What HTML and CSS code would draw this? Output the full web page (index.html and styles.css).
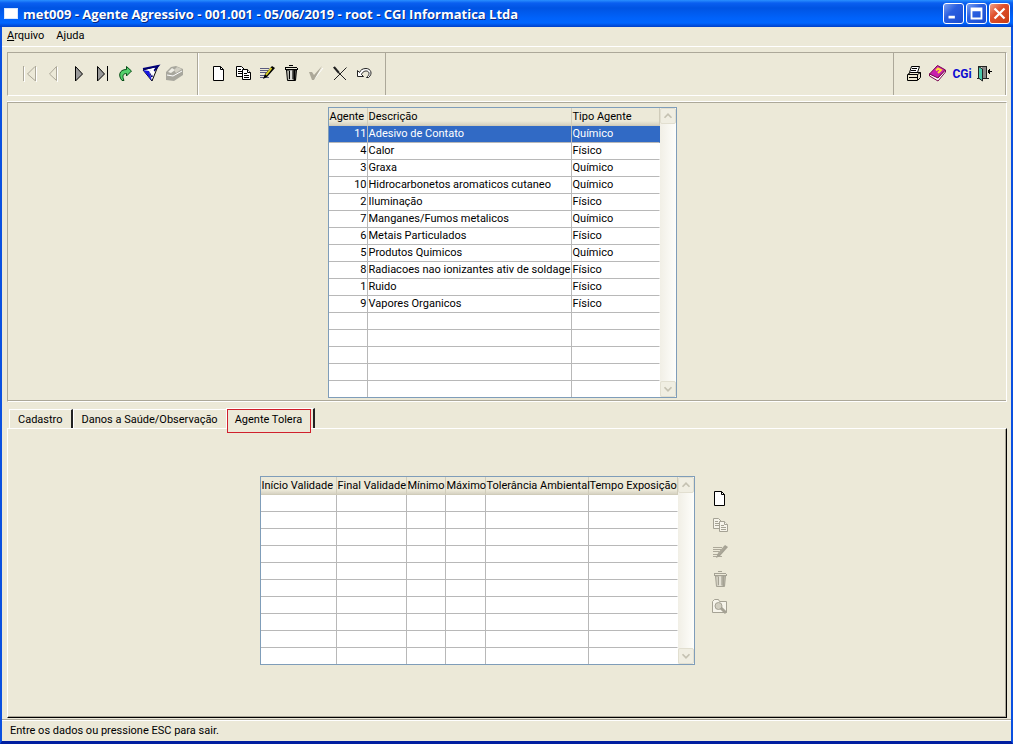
FILE: index.html
```html
<!DOCTYPE html>
<html lang="pt-BR">
<head>
<meta charset="utf-8">
<title>met009 - Agente Agressivo</title>
<link rel="stylesheet" href="styles.css">
</head>
<body>
<svg class="sprite" aria-hidden="true">
  <symbol id="i-new" viewBox="0 0 24 24"><path d="M7.500 4.500H14.500L17.500 7.500V18.500H7.500Z" fill="var(--paper)" stroke="currentColor"/><path d="M14.500 4.500V7.500H17.500" fill="none" stroke="currentColor"/></symbol>
  <symbol id="i-copy" viewBox="0 0 24 24"><g fill="var(--paper)" stroke="currentColor"><path d="M6.500 4.500H11.500L14.500 7.500V14.500H6.500Z"/><path d="M8 7.500H11M8 9.500H12M8 11.500H12"/><path d="M12.500 7.500H17.500L20.500 10.500V17.500H12.500Z"/><path d="M17.500 7.500V10.500H20.500M14 11.500H17M14 13.500H19M14 15.500H19"/></g></symbol>
  <symbol id="i-edit" viewBox="0 0 24 24"><path d="M6 6.500H15M6 8.500H14M6 10.500H12M6 13.500H11M6 15.500H15" stroke="var(--line)"/><path d="M18 4L21 6L13 15L9 17L11 12Z" fill="currentColor"/><path d="M17.500 6L12 13" stroke="var(--pencil)" stroke-width="2"/></symbol>
  <symbol id="i-trash" viewBox="0 0 24 24"><path d="M7 5.500H19M11 3.500H15M19.500 6V8M7.500 6V8M8 7.500H19" stroke="currentColor"/><path d="M8.500 8L9.500 18.500H17.500L18.500 8Z" fill="var(--can)" stroke="currentColor"/><path d="M11.500 9V17M15 9V17" stroke="currentColor"/><path d="M13 8V18" stroke="var(--paper)"/><path d="M16.500 8V18" stroke="currentColor" stroke-width="2"/></symbol>
  <symbol id="i-find" viewBox="0 0 24 24"><path d="M5.500 17.500V6.500L7.500 4.500H11.500L12.500 6.500H19.500V17.500Z" fill="var(--paper)" stroke="currentColor"/><circle cx="11.500" cy="11" r="3.500" fill="var(--can)" stroke="currentColor"/><path d="M14 13L19 18" stroke="currentColor" stroke-width="3"/></symbol>
</svg>
<div class="window">
  <header class="titlebar">
    <span class="app-icon"></span>
    <h1 class="title">met009 - Agente Agressivo - 001.001 - 05/06/2019 - root - CGI Informatica Ltda</h1>
    <div class="controls">
      <button class="control" aria-label="Minimizar"><svg viewBox="0 0 21 21"><path d="M5 13H12V16H5Z" fill="#fff"/></svg></button>
      <button class="control" aria-label="Maximizar"><svg viewBox="0 0 21 21"><path d="M4 4H17V17H4ZM6 8V15H15V8Z" fill="#fff" fill-rule="evenodd"/></svg></button>
      <button class="control close" aria-label="Fechar"><svg viewBox="0 0 21 21"><path d="M5 5L16 16M16 5L5 16" stroke="#fff" stroke-width="2.500"/></svg></button>
    </div>
  </header>
  <nav class="menu">
    <button class="menu-item"><u>A</u>rquivo</button>
    <button class="menu-item">A<u>j</u>uda</button>
  </nav>
  <div class="toolbar">
    <div class="tools">
      <button class="tool" aria-label="Primeiro" disabled><svg viewBox="0 0 24 24"><path d="M6.500 5V20M18.500 5V20" stroke="#fff"/><path d="M5.500 4V19M17.500 4V19M17 4.500L9.500 12L17 18.500" fill="none" stroke="#aca899"/></svg></button>
      <button class="tool" aria-label="Anterior" disabled><svg viewBox="0 0 24 24"><path d="M15.500 5V20" stroke="#fff"/><path d="M14.500 4.500L7.500 12L14.500 18.500Z" fill="none" stroke="#aca899"/></svg></button>
      <button class="tool" aria-label="Próximo"><svg viewBox="0 0 24 24"><path d="M9.500 4.500V19L16.500 12Z" fill="#999" stroke="#000"/></svg></button>
      <button class="tool" aria-label="Último"><svg viewBox="0 0 24 24"><path d="M7.500 4.500V19L14.500 12Z" fill="#999" stroke="#000"/><path d="M17.500 4V19" stroke="#000"/></svg></button>
      <button class="tool" aria-label="Ir para"><svg viewBox="0 0 24 24"><path d="M12.500 4.500L17.500 9L12.500 14V11.500C9 11.500 8 14 10 18.500H8C4 14 5 7.500 12.500 7.500Z" fill="#55d06b" stroke="#064d16"/></svg></button>
      <button class="tool" aria-label="Filtrar"><svg viewBox="0 0 24 24"><path d="M5 8L20 4L14 19Z" fill="#fff" stroke="#000"/><path d="M5 8L11 9L14 19Z" fill="#1616df"/><path d="M5 7L20 4L16 9M12 9L14 15" stroke="#000077" stroke-width="2" fill="none"/><path d="M11 9L14 14L16 8Z" fill="#fff"/></svg></button>
      <button class="tool" aria-label="Consultar" disabled><svg viewBox="0 0 24 24"><path d="M4 10L9 5L14 4L21 7V13L12 19L4 18Z" fill="#a8a79d"/><path d="M6 10L10 6L13 8L9 11Z" fill="#eeede5"/><path d="M5 13L11 14L20 9" fill="none" stroke="#fff"/><path d="M12 8L15 5L20 7L14 11Z" fill="#d2d0c4"/></svg></button>
    </div>
    <div class="tools">
      <button class="tool" aria-label="Novo"><svg><use href="#i-new"/></svg></button>
      <button class="tool" aria-label="Copiar"><svg><use href="#i-copy"/></svg></button>
      <button class="tool" aria-label="Editar"><svg><use href="#i-edit"/></svg></button>
      <button class="tool" aria-label="Excluir"><svg><use href="#i-trash"/></svg></button>
      <button class="tool" aria-label="Confirmar" disabled><svg viewBox="0 0 24 24"><path d="M9 12L11.500 18L21 6" fill="none" stroke="#fff"/><path d="M7 10H10L12 13L20 4L12 18H10Z" fill="#aca899"/></svg></button>
      <button class="tool" aria-label="Cancelar"><svg viewBox="0 0 24 24"><path d="M7.500 5.500L20 18M20.500 5.500L8 18" stroke="#222"/><path d="M8 5L13 11" stroke="#222" stroke-width="2"/></svg></button>
      <button class="tool" aria-label="Desfazer"><svg viewBox="0 0 24 24"><path d="M7.500 8.500V14.500H13.500L11.500 12.500C13 8 19 8 19 11.500C19 13 18 14 16.500 15.500H18.500C23 12 21 6.500 16 6.500C12.500 6.500 10.500 8 9.500 10.500Z" fill="#fff" stroke="#222"/></svg></button>
    </div>
    <div class="tools tools-end">
      <button class="tool" aria-label="Imprimir"><svg viewBox="0 0 24 24"><path d="M9.500 4.500H17.500L15.500 10.500H7.500Z" fill="#fff" stroke="#000"/><path d="M10 6.500H15M9 8.500H14" stroke="#000"/><path d="M5.500 12.500L8.500 10.500H18.500V15.500L15.500 18.500H5.500Z" fill="#eee8cf" stroke="#000"/><path d="M6 12.500H15.500V18M15.500 12.500L18.500 10.500M7 15.500H15" fill="none" stroke="#000"/></svg></button>
      <button class="tool" aria-label="Ajuda"><svg viewBox="0 0 24 24"><path d="M3.500 12L11.500 3.500L19.500 8L11.500 16Z" fill="#c81fae" stroke="#7b064f"/><path d="M3.500 12V14L12 19L19.500 10V8L12 16Z" fill="#fff" stroke="#7b064f"/><path d="M10 8.500L12 6.500L15 8L12 11" fill="none" stroke="#ffd83c" stroke-width="2"/></svg></button>
      <button class="tool logo" aria-label="CGi">CGi</button>
      <button class="tool" aria-label="Sair"><svg viewBox="0 0 24 24"><path d="M4 4.500H13M3 16.500H15M12.500 4V17" stroke="#222"/><path d="M8 5H12V16H8Z" fill="#888"/><path d="M4.500 4.500L8.500 7V19L4.500 16Z" fill="#4bc9ac" stroke="#222"/><path d="M14 9.500H18M15.500 7V12M14.500 8V11" stroke="#000"/></svg></button>
    </div>
  </div>
  <main class="main">
    <section class="browse">
      <div class="grid">
        <table class="table">
          <colgroup><col class="w39"><col class="w204"><col class="w88"></colgroup>
          <thead><tr><th>Agente</th><th>Descrição</th><th>Tipo Agente</th></tr></thead>
          <tbody>
            <tr class="selected"><td class="num">11</td><td>Adesivo de Contato</td><td>Químico</td></tr>
            <tr><td class="num">4</td><td>Calor</td><td>Físico</td></tr>
            <tr><td class="num">3</td><td>Graxa</td><td>Químico</td></tr>
            <tr><td class="num">10</td><td>Hidrocarbonetos aromaticos cutaneo</td><td>Químico</td></tr>
            <tr><td class="num">2</td><td>Iluminação</td><td>Físico</td></tr>
            <tr><td class="num">7</td><td>Manganes/Fumos metalicos</td><td>Químico</td></tr>
            <tr><td class="num">6</td><td>Metais Particulados</td><td>Físico</td></tr>
            <tr><td class="num">5</td><td>Produtos Quimicos</td><td>Químico</td></tr>
            <tr><td class="num">8</td><td>Radiacoes nao ionizantes ativ de soldage</td><td>Físico</td></tr>
            <tr><td class="num">1</td><td>Ruido</td><td>Físico</td></tr>
            <tr><td class="num">9</td><td>Vapores Organicos</td><td>Físico</td></tr>
            <tr><td></td><td></td><td></td></tr>
            <tr><td></td><td></td><td></td></tr>
            <tr><td></td><td></td><td></td></tr>
            <tr><td></td><td></td><td></td></tr>
            <tr><td></td><td></td><td></td></tr>
          </tbody>
        </table>
        <div class="scroll">
          <button class="arrow" aria-label="Subir" disabled><svg viewBox="0 0 16 16"><path d="M4 10L8 6L12 10" fill="none" stroke="#c5c2b2" stroke-width="2"/></svg></button>
          <button class="arrow" aria-label="Descer" disabled><svg viewBox="0 0 16 16"><path d="M4 6L8 10L12 6" fill="none" stroke="#c5c2b2" stroke-width="2"/></svg></button>
        </div>
      </div>
    </section>
    <div class="tabs" role="tablist">
      <button class="tab" role="tab">Cadastro</button>
      <button class="tab tab-wide" role="tab">Danos a Saúde/Observação</button>
      <button class="tab active" role="tab" aria-selected="true"><span class="mark">Agente Tolera</span></button>
    </div>
    <section class="detail">
      <div class="grid">
        <table class="table">
          <colgroup><col class="w76"><col class="w70"><col class="w39"><col class="w40"><col class="w103"><col class="w89"></colgroup>
          <thead><tr><th>Início Validade</th><th>Final Validade</th><th>Mínimo</th><th>Máximo</th><th>Tolerância Ambiental</th><th>Tempo Exposição</th></tr></thead>
          <tbody>
            <tr><td></td><td></td><td></td><td></td><td></td><td></td></tr>
            <tr><td></td><td></td><td></td><td></td><td></td><td></td></tr>
            <tr><td></td><td></td><td></td><td></td><td></td><td></td></tr>
            <tr><td></td><td></td><td></td><td></td><td></td><td></td></tr>
            <tr><td></td><td></td><td></td><td></td><td></td><td></td></tr>
            <tr><td></td><td></td><td></td><td></td><td></td><td></td></tr>
            <tr><td></td><td></td><td></td><td></td><td></td><td></td></tr>
            <tr><td></td><td></td><td></td><td></td><td></td><td></td></tr>
            <tr><td></td><td></td><td></td><td></td><td></td><td></td></tr>
            <tr><td></td><td></td><td></td><td></td><td></td><td></td></tr>
          </tbody>
        </table>
        <div class="scroll">
          <button class="arrow" aria-label="Subir" disabled><svg viewBox="0 0 16 16"><path d="M4 10L8 6L12 10" fill="none" stroke="#c5c2b2" stroke-width="2"/></svg></button>
          <button class="arrow" aria-label="Descer" disabled><svg viewBox="0 0 16 16"><path d="M4 6L8 10L12 6" fill="none" stroke="#c5c2b2" stroke-width="2"/></svg></button>
        </div>
      </div>
      <div class="side">
        <button class="tool" aria-label="Novo item"><svg><use href="#i-new"/></svg></button>
        <button class="tool" aria-label="Copiar item" disabled><svg><use href="#i-copy"/></svg></button>
        <button class="tool" aria-label="Editar item" disabled><svg><use href="#i-edit"/></svg></button>
        <button class="tool" aria-label="Excluir item" disabled><svg><use href="#i-trash"/></svg></button>
        <button class="tool" aria-label="Localizar item" disabled><svg><use href="#i-find"/></svg></button>
      </div>
    </section>
  </main>
  <footer class="status">Entre os dados ou pressione ESC para sair.</footer>
</div>
</body>
</html>
```
FILE: styles.css
```css
* { box-sizing: border-box; }
body {
  margin: 0;
  font: 11px/16px Roboto, "Liberation Sans", sans-serif;
  color: #000;
}
button {
  margin: 0;
  padding: 0;
  border: 0;
  background: none;
  font: inherit;
  color: inherit;
}
svg { display: block; }
.sprite { position: absolute; width: 0; height: 0; }
.window {
  display: flex;
  flex-direction: column;
  min-height: 100vh;
  background: #ece9d8;
  border: solid #0a50e0;
  border-width: 0 2px 3px;
  border-bottom-color: #001ea0;
}
.titlebar {
  display: flex;
  align-items: center;
  height: 27px;
  margin: 0 -2px;
  padding: 0 3px 0 4px;
  background: linear-gradient(#2a90ff 0, #0a5ff0 3px, #0054e3 8px, #0062fa 18px, #0066ff 23px, #0040c8 27px);
}
.app-icon { width: 14px; height: 11px; background: #fff; border: 1px solid #d8e8ff; }
.title {
  flex: 1;
  margin: 0 0 0 5px;
  font: bold 13px/16px "Open Sans", sans-serif;
  color: #fff;
  text-shadow: 1px 1px 0 #0a2a80;
  white-space: nowrap;
}
.controls { display: flex; gap: 2px; }
.control {
  width: 21px;
  height: 21px;
  border: 1px solid #fff;
  border-radius: 3px;
  background: linear-gradient(135deg, #7ba0f0, #2a5fe0 40%, #1a4cd0);
}
.control svg { width: 19px; height: 19px; }
.close { background: linear-gradient(135deg, #f0a088, #e0502c 40%, #c83c14); }
.menu {
  display: flex;
  gap: 12px;
  height: 20px;
  padding: 0 5px 1px;
  border-bottom: 1px solid #fff;
}
.toolbar {
  display: flex;
  margin: 5px 4px 0 5px;
  border: 1px solid #aca899;
  border-right-color: #fff;
  border-bottom-color: #fff;
}
.tools {
  display: flex;
  padding: 9px 11px 9px 10px;
  border-right: 1px solid #aca899;
}
.tools + .tools { padding: 9px 11px 9px 7px; border-left: 1px solid #fff; }
.toolbar .tools-end { margin-left: auto; padding: 9px 7px 9px 8px; border-left: 1px solid #aca899; }
.tool {
  --paper: #fff;
  --line: #5b5b80;
  --pencil: #d8cf26;
  --can: #b9b9b0;
  width: 24px;
  height: 24px;
}
.tool svg { width: 24px; height: 24px; }
.tool:disabled {
  --paper: #f6f4ea;
  --line: #aca899;
  --pencil: #aca899;
  --can: #d2cfc1;
  color: #a5a294;
}
.logo {
  font: bold 12px/24px Roboto, sans-serif;
  color: #0c0cd0;
}
.main { display: flex; flex: 1; flex-direction: column; padding: 6px 4px 1px 5px; }
.browse {
  display: flex;
  justify-content: center;
  padding: 4px 10px 3px 0;
  border: 1px solid #aca899;
  border-right-color: #fff;
  border-bottom-color: #fff;
  box-shadow: 0 -1px #fff, inset 0 -1px #aca899;
}
.grid { display: flex; border: 1px solid #7f9db9; background: #fff; }
.table { table-layout: fixed; border-collapse: separate; border-spacing: 0; width: min-content; }
.w39 { width: 39px; }
.w40 { width: 40px; }
.w70 { width: 70px; }
.w76 { width: 76px; }
.w88 { width: 88px; }
.w89 { width: 89px; }
.w103 { width: 103px; }
.w204 { width: 204px; }
.table th, .table td {
  height: 17px;
  padding: 0 0 0 1px;
  border: solid #b8b8b8;
  border-width: 0 1px 1px 0;
  line-height: 16px;
  font-weight: normal;
  text-align: left;
  white-space: nowrap;
}
.table th {
  height: 18px;
  background: linear-gradient(#ece9d8 13px, #d6d2c2);
  border-color: #d0ccba;
}
.table td:last-child { border-right-color: #fff; }
.table .num { padding: 0; text-align: right; }
.table tr:last-child td { border-bottom: 0; }
.table tbody tr:last-child td { height: 16px; }
.selected td { background: #316ac5; color: #fff; }
.table .selected td:last-child { border-right-color: #316ac5; }
.scroll {
  display: flex;
  flex-direction: column;
  justify-content: space-between;
  width: 16px;
  background: linear-gradient(90deg, #f1efe6, #fefefb);
}
.arrow {
  width: 16px;
  height: 16px;
  border: 1px solid #e2dfd0;
  border-radius: 2px;
  background: #f0eee2;
}
.arrow svg { width: 14px; height: 14px; }
.tabs { display: flex; align-items: flex-end; margin-top: 6px; padding-left: 2px; }
.tab {
  height: 19px;
  padding: 1px 8px 0;
  border-top: 1px solid #fff;
  border-left: 1px solid #fff;
  border-right: 2px solid #222;
}
.tab-wide { border-right: 0; }
.active { display: flex; height: 20px; padding: 0 2px 0 0; }
.mark {
  z-index: 1;
  height: 24px;
  padding: 2px 8px 0 7px;
  border: 1px solid #d0202c;
  background: #ece9d8;
}
.detail {
  display: flex;
  flex: 1;
  align-items: flex-start;
  justify-content: center;
  gap: 12px;
  padding: 47px 24px 16px 0;
  border: solid #000;
  border-width: 1px;
  border-top-color: #fff;
  border-left-color: #fff;
  box-shadow: inset -1px -1px #aca899;
}
.side { display: flex; flex-direction: column; gap: 3px; padding-top: 11px; }
.status {
  padding: 3px 8px 2px;
  border-top: 1px solid #aca899;
  box-shadow: inset 0 1px #fff;
}
```
